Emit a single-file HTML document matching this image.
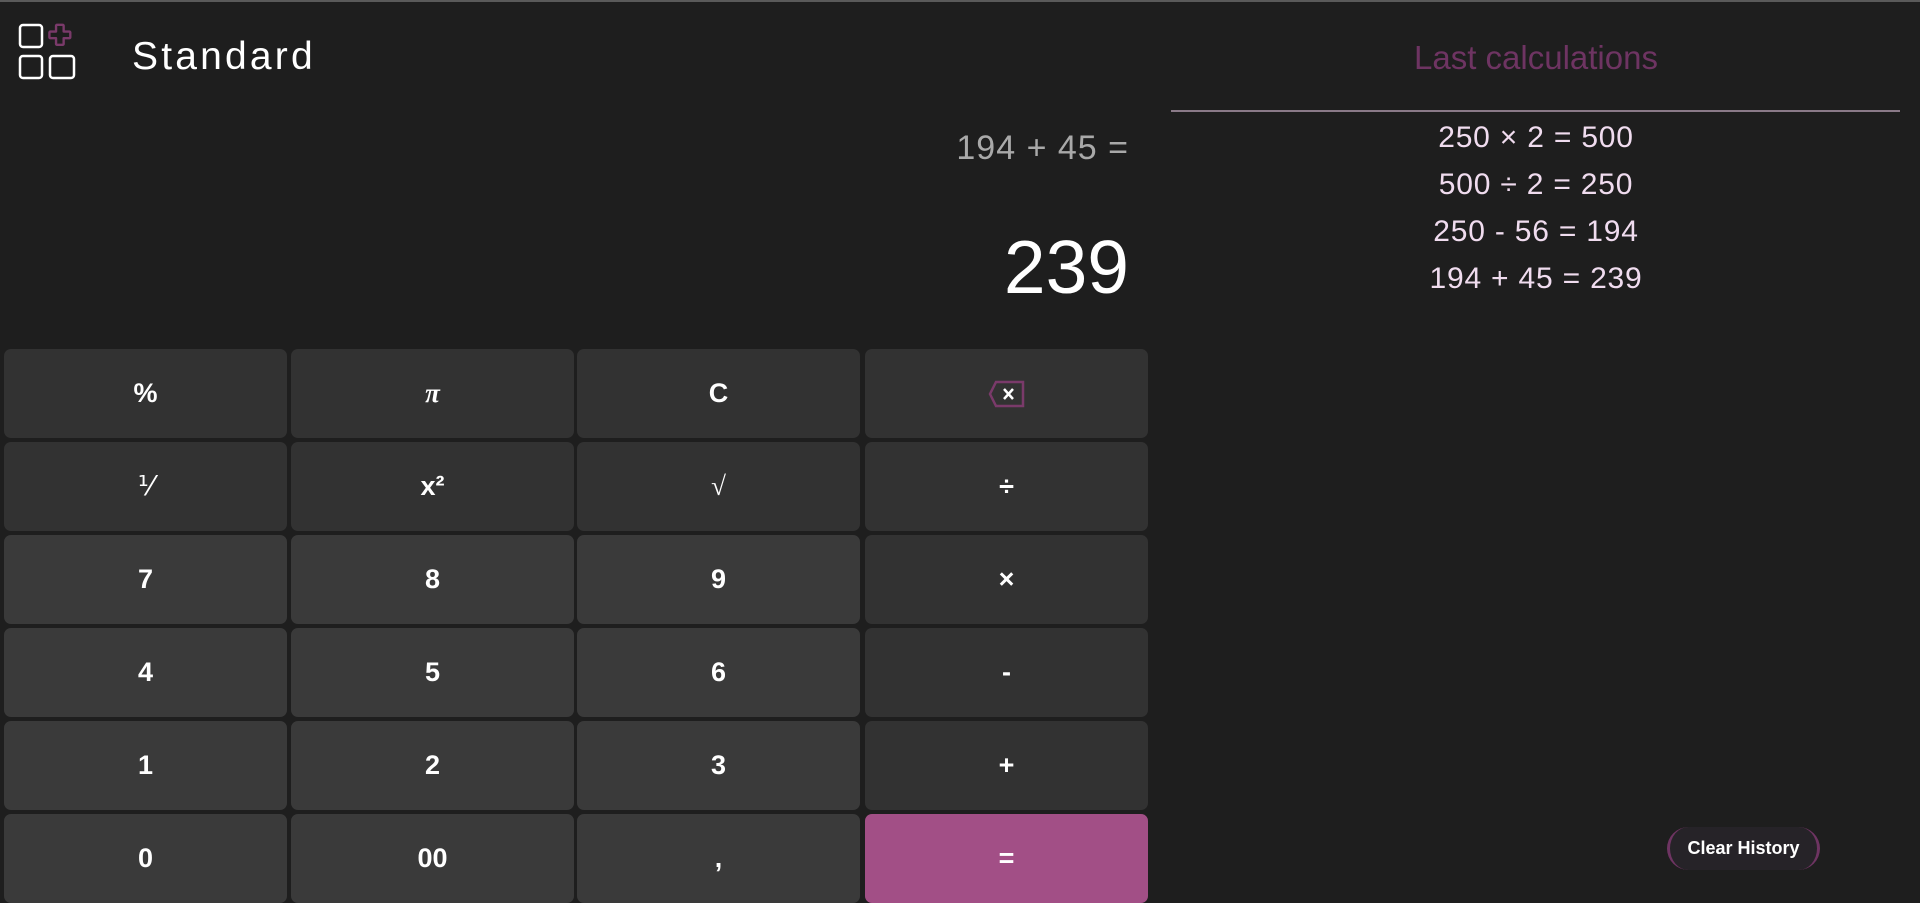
<!DOCTYPE html>
<html><head><meta charset="utf-8"><style>
*{margin:0;padding:0;box-sizing:border-box}
body{width:1920px;height:900px;background:#1e1e1e;overflow:hidden;font-family:"Liberation Sans",sans-serif;position:relative;border-top:2px solid #5a5a5a}
.abs{position:absolute}
.title{left:132px;top:33px;font-size:39px;color:#fff;letter-spacing:3.2px}
.expr{right:791px;top:127px;font-size:34px;color:#a9a9a9;letter-spacing:1px}
.res{right:791px;top:222px;font-size:75px;color:#fff}
.btn{position:absolute;width:283px;height:89px;border-radius:7px;background:#323232;color:#fff;font-size:27px;font-weight:bold;display:flex;align-items:center;justify-content:center}
.d{background:#3a3a3a}
.eq{background:#a24f86}
.hist{left:1172px;width:728px;text-align:center}
.ht{top:37px;font-size:33px;color:#6e3462}
.line{left:1171px;top:108px;width:729px;height:2px;background:#8a7a88}
.hl{font-size:30px;color:#f0dcef;letter-spacing:0.8px}
.clear{left:1667px;top:825px;width:153px;height:43px;border-radius:22px;background:#262328;border-left:3px solid #6e3462;border-right:3px solid #6e3462;color:#fff;font-weight:bold;font-size:18px;display:flex;align-items:center;justify-content:center}
</style></head><body>
<svg class="abs" style="left:18px;top:19px" width="60" height="62" viewBox="0 0 60 60">
<rect x="2" y="3" width="22" height="22" rx="3" fill="none" stroke="#fff" stroke-width="2.5"/>
<rect x="2" y="34" width="22" height="22" rx="3" fill="none" stroke="#fff" stroke-width="2.5"/>
<rect x="32" y="34" width="24" height="22" rx="3" fill="none" stroke="#fff" stroke-width="2.5"/>
<path d="M40 3h6a1 1 0 0 1 1 1v6h6a1 1 0 0 1 1 1v5a1 1 0 0 1-1 1h-6v6a1 1 0 0 1-1 1h-6a1 1 0 0 1-1-1v-6h-6a1 1 0 0 1-1-1v-5a1 1 0 0 1 1-1h6v-6a1 1 0 0 1 1-1z" fill="none" stroke="#7a3a6a" stroke-width="2.5" stroke-linejoin="round" transform="translate(1,0) scale(0.95)"/>
</svg>
<div class="abs title">Standard</div>
<div class="abs expr">194 + 45 =</div>
<div class="abs res">239</div>

<div class="btn" style="left:4px;top:347px">%</div>
<div class="btn" style="left:291px;top:347px;font-family:'Liberation Serif',serif;font-style:italic">π</div>
<div class="btn" style="left:577px;top:347px">C</div>
<div class="btn" style="left:865px;top:347px"><svg width="40" height="30" viewBox="0 0 40 30"><path d="M9 3h27v24H9L3 15z" fill="none" stroke="#7a3a6a" stroke-width="2.5"/><path d="M17 10l9 10M26 10l-9 10" stroke="#fff" stroke-width="2.5"/></svg></div>
<div class="btn" style="left:4px;top:440px;font-family:'Liberation Serif',serif;font-weight:normal">⅟</div>
<div class="btn" style="left:291px;top:440px">x²</div>
<div class="btn" style="left:577px;top:440px;font-family:'Liberation Serif',serif;font-weight:normal">√</div>
<div class="btn" style="left:865px;top:440px">÷</div>
<div class="btn d" style="left:4px;top:533px">7</div>
<div class="btn d" style="left:291px;top:533px">8</div>
<div class="btn d" style="left:577px;top:533px">9</div>
<div class="btn" style="left:865px;top:533px">×</div>
<div class="btn d" style="left:4px;top:626px">4</div>
<div class="btn d" style="left:291px;top:626px">5</div>
<div class="btn d" style="left:577px;top:626px">6</div>
<div class="btn" style="left:865px;top:626px">-</div>
<div class="btn d" style="left:4px;top:719px">1</div>
<div class="btn d" style="left:291px;top:719px">2</div>
<div class="btn d" style="left:577px;top:719px">3</div>
<div class="btn" style="left:865px;top:719px">+</div>
<div class="btn d" style="left:4px;top:812px">0</div>
<div class="btn d" style="left:291px;top:812px">00</div>
<div class="btn d" style="left:577px;top:812px">,</div>
<div class="btn eq" style="left:865px;top:812px">=</div>

<div class="abs hist ht">Last calculations</div>
<div class="abs line"></div>
<div class="abs hist hl" style="top:119px">250 × 2 = 500</div>
<div class="abs hist hl" style="top:166px">500 ÷ 2 = 250</div>
<div class="abs hist hl" style="top:213px">250 - 56 = 194</div>
<div class="abs hist hl" style="top:260px">194 + 45 = 239</div>
<div class="abs clear">Clear History</div>
</body></html>
